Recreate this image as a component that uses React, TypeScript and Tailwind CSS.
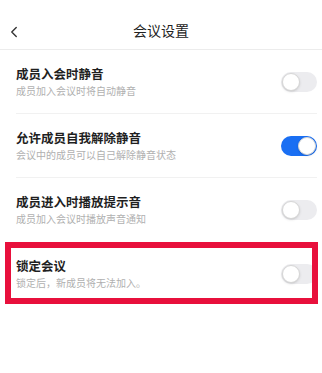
import { ChevronLeft } from "lucide-react";

const settings = [
  { title: "成员入会时静音", desc: "成员加入会议时将自动静音", on: false },
  { title: "允许成员自我解除静音", desc: "会议中的成员可以自己解除静音状态", on: true },
  { title: "成员进入时播放提示音", desc: "成员加入会议时播放声音通知", on: false },
  { title: "锁定会议", desc: "锁定后，新成员将无法加入。", on: false, marked: true },
];

function Toggle({ on }: { on: boolean }) {
  return (
    <div
      className={`relative w-[36px] h-[20px] rounded-full shrink-0 ${
        on ? "bg-[#1a6ff3]" : "bg-[#ececef]"
      }`}
    >
      <div
        className={`absolute top-[1px] w-[18px] h-[18px] rounded-full bg-white border border-[#d6d6d6] shadow-sm ${
          on ? "left-[17px]" : "left-[1px]"
        }`}
      />
    </div>
  );
}

export default function App() {
  return (
    <div
      className="w-[322px] h-[373px] bg-white text-[#1f1f1f]"
      style={{ fontFamily: '"Noto Sans CJK SC", "Noto Sans", sans-serif' }}
    >
      <header className="relative h-[50px] flex items-center justify-center border-b border-[#ececec]">
        <ChevronLeft size={18} strokeWidth={1.8} className="absolute left-[5px] top-[23px] text-[#333]" />
        <h1 className="text-[14px] text-[#222] mt-[11px]">会议设置</h1>
      </header>

      {settings.map((s, i) => (
        <div key={s.title} className="relative h-[64px] pl-4 pr-[5px]">
          <div
            className={`h-full flex items-center justify-between ${
              i < 2 ? "border-b border-[#f1f1f1]" : ""
            }`}
          >
            <div className="flex flex-col gap-[2px]">
              <span className="text-[12.5px] font-bold leading-[16px]">{s.title}</span>
              <span className="text-[10px] text-[#b0b0b0] leading-[14px]">{s.desc}</span>
            </div>
            <Toggle on={s.on} />
          </div>
          {s.marked && (
            <div className="absolute left-[5px] right-[4px] top-0 bottom-[2px] border-[6px] border-[#e8103c] pointer-events-none" />
          )}
        </div>
      ))}
    </div>
  );
}
